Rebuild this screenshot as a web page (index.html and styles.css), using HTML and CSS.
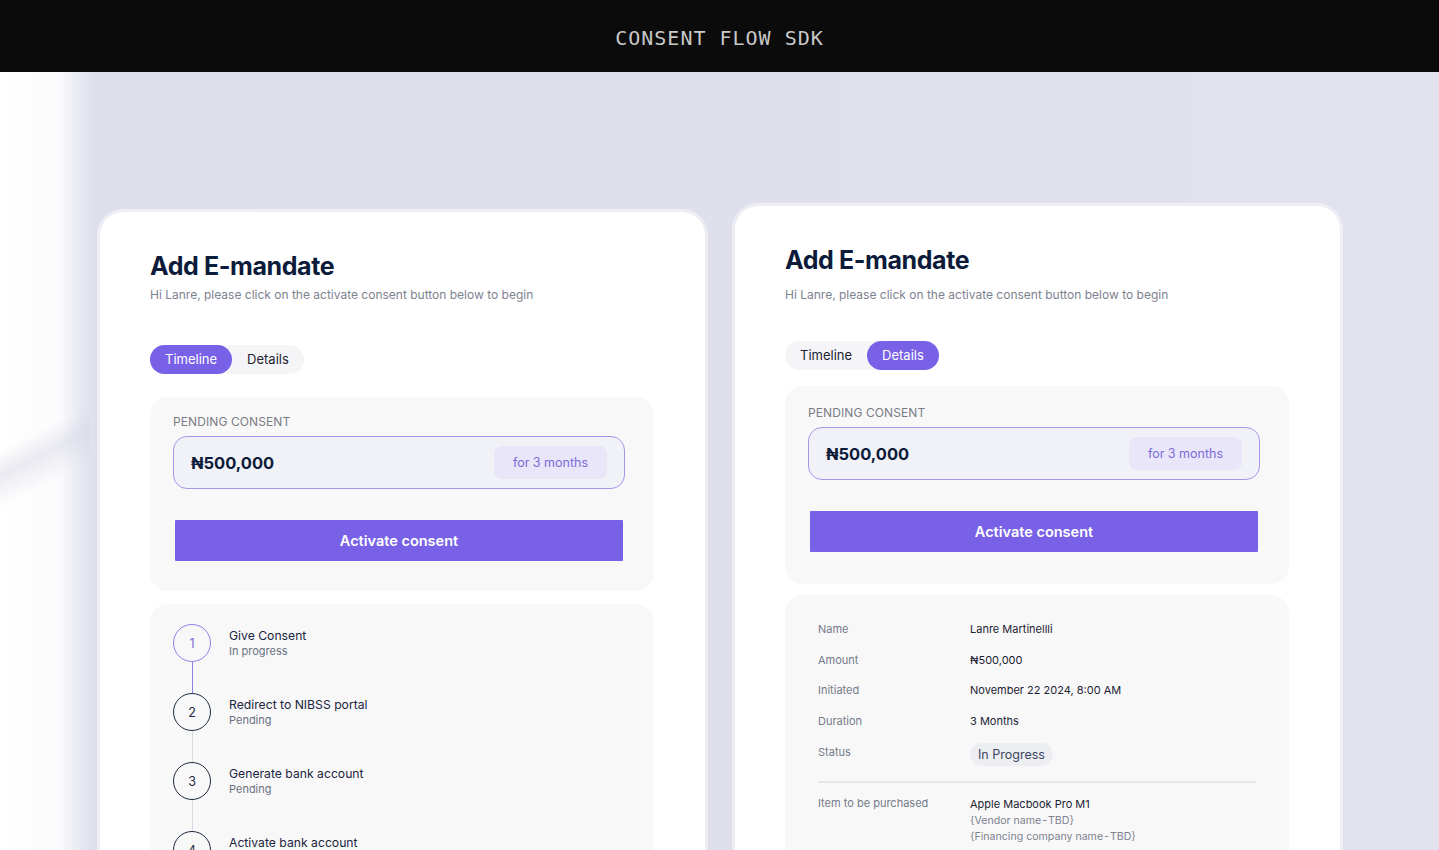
FILE: index.html
```html
<!DOCTYPE html>
<html lang="en">
<head>
<meta charset="utf-8">
<title>Consent Flow SDK</title>
<link rel="stylesheet" href="styles.css">
</head>
<body>
<header class="topbar">
  <h1 class="brand">CONSENT FLOW SDK</h1>
</header>
<main class="stage">
  <section class="card card--left">
    <h2 class="title">Add E-mandate</h2>
    <p class="subtitle subtitle--left">Hi Lanre, please click on the activate consent button below to begin</p>
    <div class="tabs tabs--left">
      <span class="tab tab--active">Timeline</span>
      <span class="tab">Details</span>
    </div>
    <div class="panel pending pending--left">
      <div class="pending-label">PENDING CONSENT</div>
      <div class="amount-box">
        <span class="amount">₦500,000</span>
        <span class="period">for 3 months</span>
      </div>
      <button class="activate">Activate consent</button>
    </div>
    <div class="panel timeline">
      <div class="step">
        <div class="rail">
          <span class="dot dot--current">1</span>
          <span class="line line--done"></span>
        </div>
        <div class="step-text">
          <div class="step-title">Give Consent</div>
          <div class="step-sub">In progress</div>
        </div>
      </div>
      <div class="step">
        <div class="rail">
          <span class="dot">2</span>
          <span class="line"></span>
        </div>
        <div class="step-text">
          <div class="step-title">Redirect to NIBSS portal</div>
          <div class="step-sub">Pending</div>
        </div>
      </div>
      <div class="step">
        <div class="rail">
          <span class="dot">3</span>
          <span class="line"></span>
        </div>
        <div class="step-text">
          <div class="step-title">Generate bank account</div>
          <div class="step-sub">Pending</div>
        </div>
      </div>
      <div class="step">
        <div class="rail">
          <span class="dot">4</span>
        </div>
        <div class="step-text">
          <div class="step-title">Activate bank account</div>
          <div class="step-sub">Pending</div>
        </div>
      </div>
    </div>
  </section>

  <section class="card card--right">
    <h2 class="title">Add E-mandate</h2>
    <p class="subtitle subtitle--right">Hi Lanre, please click on the activate consent button below to begin</p>
    <div class="tabs tabs--right">
      <span class="tab">Timeline</span>
      <span class="tab tab--active">Details</span>
    </div>
    <div class="panel pending pending--right">
      <div class="pending-label">PENDING CONSENT</div>
      <div class="amount-box">
        <span class="amount">₦500,000</span>
        <span class="period">for 3 months</span>
      </div>
      <button class="activate">Activate consent</button>
    </div>
    <div class="panel details">
      <div class="row"><span class="key">Name</span><span class="val">Lanre Martinellli</span></div>
      <div class="row"><span class="key">Amount</span><span class="val">₦500,000</span></div>
      <div class="row"><span class="key">Initiated</span><span class="val">November 22 2024, 8:00 AM</span></div>
      <div class="row"><span class="key">Duration</span><span class="val">3 Months</span></div>
      <div class="row row--status"><span class="key">Status</span><span class="val"><span class="status">In Progress</span></span></div>
      <hr class="divider">
      <div class="row row--item">
        <span class="key">Item to be purchased</span>
        <span class="val">
          <span class="item-name">Apple Macbook Pro M1</span>
          <span class="item-sub">{Vendor name&#8202;-&#8202;TBD}</span>
          <span class="item-sub">{Financing company name&#8202;-&#8202;TBD}</span>
        </span>
      </div>
    </div>
  </section>
</main>
</body>
</html>
```

FILE: styles.css
```css
* { box-sizing: border-box; }

html, body {
  margin: 0;
  padding: 0;
  height: 850px;
  overflow: hidden;
}

body {
  font-family: Inter, "Liberation Sans", Arial, sans-serif;
  background: #ffffff;
  color: #1a2540;
}

.topbar {
  height: 72px;
  background: #0b0b0b;
  display: flex;
  align-items: center;
  justify-content: center;
  padding-top: 4px;
}

.brand {
  margin: 0;
  font-family: "DejaVu Sans Mono", "Liberation Mono", monospace;
  font-weight: normal;
  font-size: 20px;
  letter-spacing: 1px;
  color: #c8c8c8;
}

.stage {
  height: 778px;
  display: flex;
  justify-content: center;
  align-items: flex-start;
  gap: 24px;
  padding-left: 1px;
  background:
    linear-gradient(153deg, rgba(255,255,255,0) 0 46%, rgba(214,215,228,0.5) 49%, rgba(255,255,255,0) 53% 100%) 0 0 / 90px 100% no-repeat,
    linear-gradient(to right, #ffffff 0, #fbfbfd 60px, #e4e5ef 84px, #dedfeb 96px, #dfe0ec 60%, #e2e3ee 100%);
}

.card {
  width: 611px;
  height: 760px;
  background: #ffffff;
  background-clip: padding-box;
  border: 3px solid rgba(255,255,255,0.45);
  border-radius: 26px;
  padding: 38px 50px 0 50px;
}

.card--left { margin-top: 137px; }
.card--right { margin-top: 131px; }

.title {
  margin: 0;
  font-size: 25px;
  line-height: 32px;
  font-weight: 700;
  color: #0c1b3a;
  letter-spacing: -0.4px;
}

.subtitle {
  margin: 0;
  font-size: 12px;
  line-height: 18px;
  color: #7d828f;
}
.subtitle--left { margin-top: 4px; }
.subtitle--right { margin-top: 10px; }

.tabs {
  display: inline-flex;
  background: #f5f5f7;
  border-radius: 15px;
}
.tabs--left { margin-top: 41px; }
.tabs--right { margin-top: 37px; }

.tab {
  height: 29px;
  line-height: 29px;
  padding: 0 15px;
  border-radius: 15px;
  font-size: 13px;
  color: #1d2333;
}
.tab--active {
  background: #7861e6;
  color: #ffffff;
}

.panel {
  width: 504px;
  background: #f8f8f9;
  border-radius: 18px;
}

.pending {
  padding: 17px 29px 30px 23px;
}
.pending--left { margin-top: 23px; }
.pending--right { margin-top: 16px; padding-top: 19px; padding-bottom: 32px; }

.pending-label {
  font-size: 12px;
  line-height: 16px;
  color: #7a7d86;
  letter-spacing: 0.1px;
}

.amount-box {
  margin-top: 6px;
  height: 53px;
  border: 1px solid #a497ea;
  border-radius: 14px;
  background: #f1f1f8;
  display: flex;
  align-items: center;
  justify-content: space-between;
  padding: 0 17px;
}

.amount {
  font-size: 16.5px;
  font-weight: 700;
  color: #0c1b3a;
}

.period {
  height: 33px;
  line-height: 33px;
  padding: 0 19px;
  border-radius: 8px;
  background: #e8e6f8;
  color: #7b6bd8;
  font-size: 12.5px;
}

.activate {
  display: block;
  width: 448px;
  height: 41px;
  margin: 31px 0 0 2px;
  border: none;
  border-radius: 1px;
  background: #7861e6;
  color: #ffffff;
  font-family: inherit;
  font-size: 14.5px;
  font-weight: 600;
}

.timeline {
  margin-top: 13px;
  padding: 20px 23px 0 23px;
  height: 300px;
}

.step {
  display: flex;
  gap: 18px;
}

.rail {
  display: flex;
  flex-direction: column;
  align-items: center;
  width: 38px;
}

.dot {
  width: 38px;
  height: 38px;
  border-radius: 50%;
  border: 1px solid #1e2a40;
  display: flex;
  align-items: center;
  justify-content: center;
  font-size: 12.5px;
  color: #1e2a40;
  flex: none;
}
.dot--current {
  border-color: #8f82e8;
  color: #7b6bd8;
}

.line {
  width: 1px;
  height: 31px;
  background: #d8dae0;
}
.line--done { background: #8f82e8; }

.step-text {
  padding-top: 4px;
}
.step-title {
  font-size: 12.2px;
  line-height: 16px;
  color: #1a2540;
}
.step-sub {
  font-size: 11px;
  line-height: 14px;
  color: #6b7180;
}

.details {
  margin-top: 11px;
  padding: 19px 33px 0 33px;
  height: 300px;
}

.row {
  display: grid;
  grid-template-columns: 152px 1fr;
  min-height: 30.5px;
  align-items: center;
  font-size: 11px;
}

.key { color: #747a88; }
.val { color: #1d2333; }

.row--status {
  align-items: start;
  padding-top: 7px;
  min-height: 45px;
}
.row--status .key { padding-top: 2px; }

.status {
  display: inline-block;
  height: 23px;
  line-height: 23px;
  padding: 0 8px;
  border-radius: 12px;
  background: #eceef2;
  color: #3c4660;
  font-size: 12.5px;
}

.divider {
  margin: 0;
  border: none;
  height: 2px;
  background: #e6e7ea;
}

.row--item {
  align-items: start;
  padding-top: 13px;
}

.row--item .val {
  display: flex;
  flex-direction: column;
  line-height: 16.5px;
}

.item-sub {
  color: #7d828f;
  font-size: 10.6px;
}
```
